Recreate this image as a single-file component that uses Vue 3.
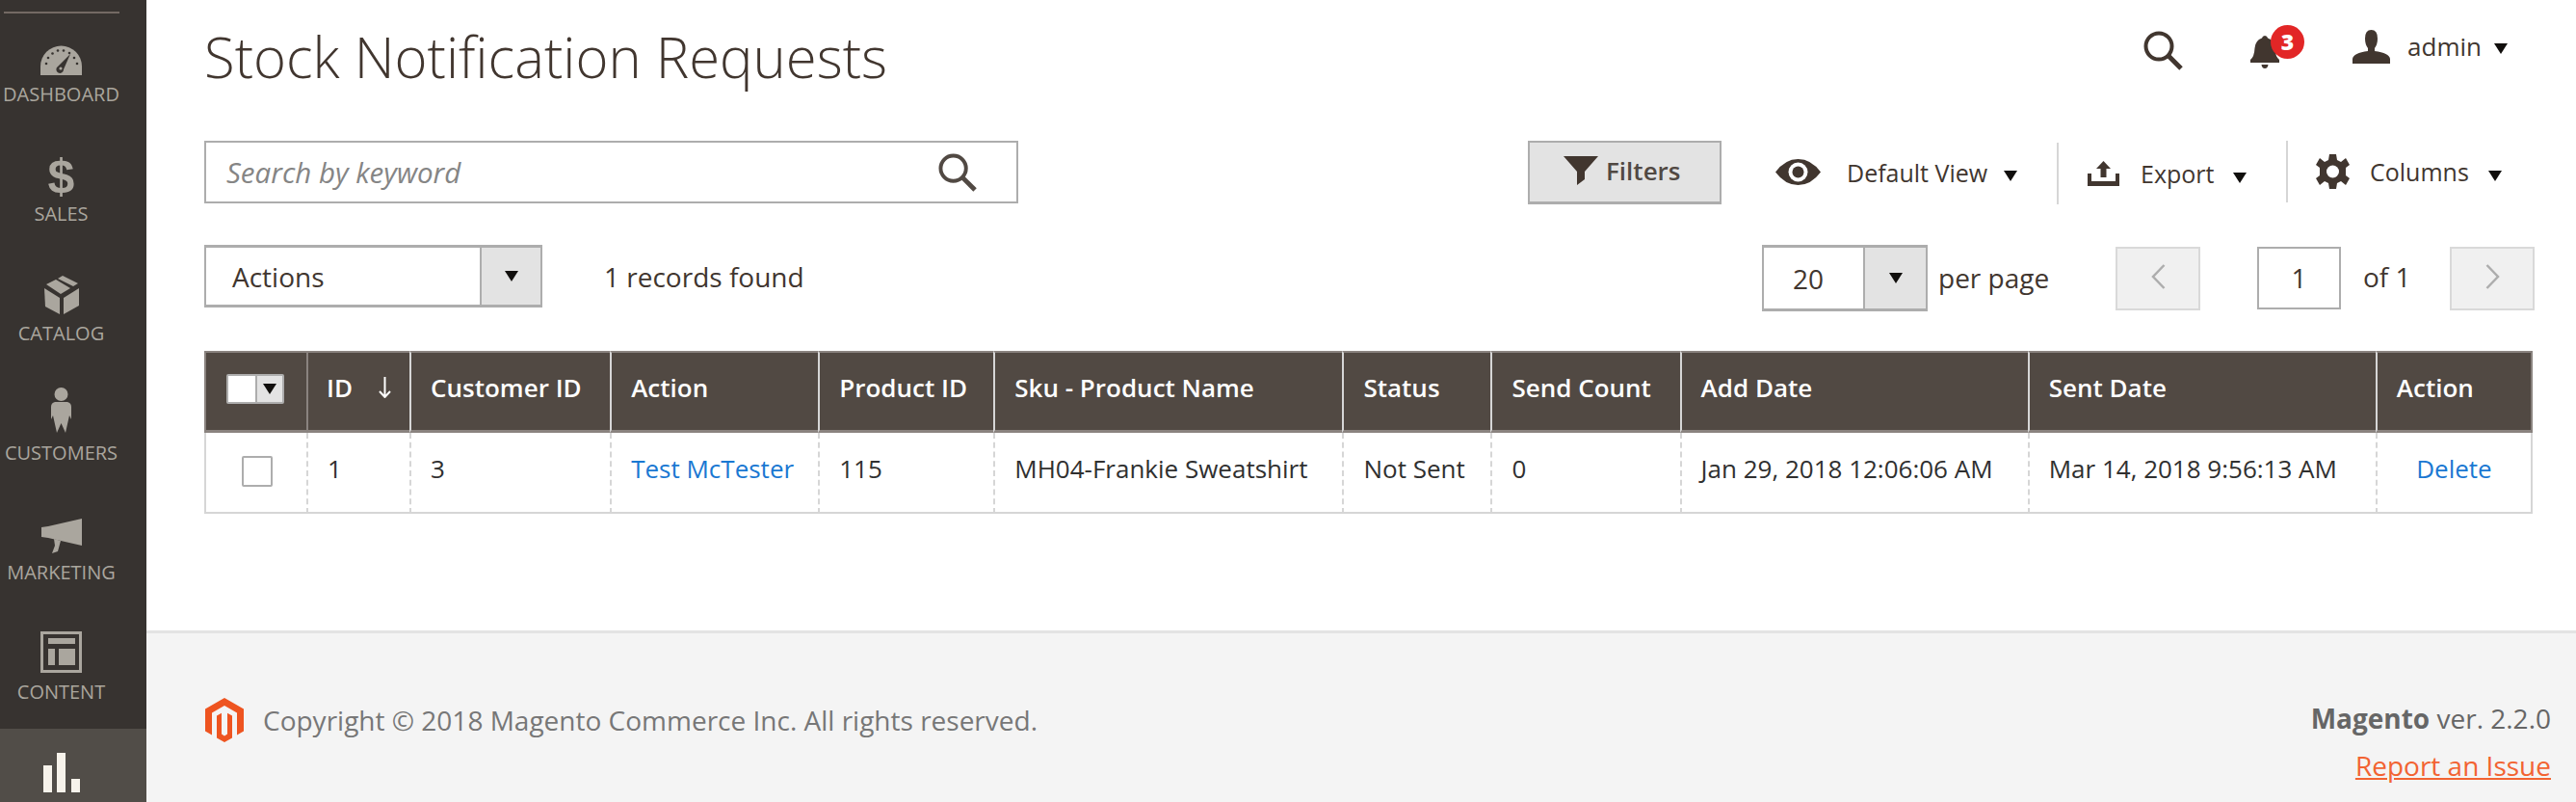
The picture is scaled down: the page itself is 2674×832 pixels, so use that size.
<script setup>
const columns = [
  { label: '', width: 106 },
  { label: 'ID', width: 107, sort: true },
  { label: 'Customer ID', width: 208 },
  { label: 'Action', width: 216 },
  { label: 'Product ID', width: 182 },
  { label: 'Sku - Product Name', width: 362 },
  { label: 'Status', width: 154 },
  { label: 'Send Count', width: 196 },
  { label: 'Add Date', width: 361 },
  { label: 'Sent Date', width: 361 },
  { label: 'Action', width: 163 }
]
const row = ['1', '3', 'Test McTester', '115', 'MH04-Frankie Sweatshirt', 'Not Sent', '0', 'Jan 29, 2018 12:06:06 AM', 'Mar 14, 2018 9:56:13 AM']
</script>

<template>
  <div class="app">
    <aside class="sidebar">
      <div class="rule"></div>
      <nav>
        <a class="item">
          <span class="ico">
            <svg width="43" height="31" viewBox="0 0 43 31">
              <path d="M0 31V22A21.5 21.5 0 0 1 43 22V31Z" fill="#aaa69e"/>
              <g fill="#373330">
                <circle cx="6" cy="19" r="1.3"/><circle cx="8" cy="13" r="1.3"/><circle cx="12.500" cy="8.500" r="1.300"/><circle cx="18" cy="5.500" r="1.300"/><circle cx="24" cy="5.500" r="1.300"/><circle cx="30" cy="8" r="1.300"/><circle cx="35" cy="13" r="1.300"/><circle cx="38" cy="19" r="1.300"/>
                <path d="M31 9 24 25A3.800 3.800 0 1 1 18 22Z"/>
              </g>
              <circle cx="21" cy="24" r="1.600" fill="#aaa69e"/>
            </svg>
          </span>
          <span class="lbl">Dashboard</span>
        </a>
        <a class="item">
          <span class="ico dollar">$</span>
          <span class="lbl">Sales</span>
        </a>
        <a class="item">
          <span class="ico">
            <svg width="36" height="40" viewBox="0 0 36 40" fill="#aaa69e">
              <path d="M0 13 16 23V40L1 32Z"/><path d="M20 23 36 13V31L20 40Z"/>
              <path d="M2 9 12 4 27 13 17 19Z"/><path d="M14 3 19 0 35 8 30 11Z"/>
            </svg>
          </span>
          <span class="lbl">Catalog</span>
        </a>
        <a class="item">
          <span class="ico">
            <svg width="21" height="48" viewBox="0 0 21 48" fill="#aaa69e">
              <circle cx="10.500" cy="7" r="7"/>
              <path d="M4 15H17Q21 16 21 20V33L19 29 15 47 10.500 37 6 47 2 29 0 33V20Q0 16 4 15Z"/>
            </svg>
          </span>
          <span class="lbl">Customers</span>
        </a>
        <a class="item">
          <span class="ico">
            <svg width="42" height="36" viewBox="0 0 42 36" fill="#aaa69e">
              <path d="M0 9 7 8V20L0 19Z"/><path d="M7 8 42 0V28L7 20Z"/><path d="M13 21 20 23 17 34 11 36 14 28Z"/>
            </svg>
          </span>
          <span class="lbl">Marketing</span>
        </a>
        <a class="item">
          <span class="ico">
            <svg width="43" height="43" viewBox="0 0 43 43" fill="#aaa69e">
              <path d="M0 0H43V43H0ZM3 3V40H40V3Z" fill-rule="evenodd"/>
              <rect x="8" y="7" width="28" height="6"/><rect x="8" y="18" width="7" height="17"/><rect x="19" y="18" width="17" height="17"/>
            </svg>
          </span>
          <span class="lbl">Content</span>
        </a>
        <a class="item active">
          <span class="ico">
            <svg width="38" height="41" viewBox="0 0 38 41" fill="#f7f3eb">
              <rect x="0" y="13" width="9" height="28"/><rect x="14" y="0" width="9" height="41"/><rect x="29" y="27" width="9" height="14"/>
            </svg>
          </span>
        </a>
      </nav>
    </aside>

    <main class="main">
      <header class="top">
        <h1>Stock Notification Requests</h1>
        <div class="actions-top">
          <svg class="i-search" width="41" height="41" viewBox="0 0 41 41" fill="none" stroke="#41362f">
            <circle cx="16" cy="16" r="13.500" stroke-width="4"/><path d="M26 26 39 39" stroke-width="5"/>
          </svg>
          <div class="bell">
            <svg width="30" height="35" viewBox="0 0 30 35" fill="#41362f">
              <path d="M15 0Q17.500 0 18 2.500 25 5 25.500 13 26 22 30 25V28H0V25Q4 22 4.500 13 5 5 12 2.500 12.500 0 15 0Z"/><path d="M11.500 30H18.500Q18 34 15 34 12 34 11.500 30Z"/>
            </svg>
            <span class="badge">3</span>
          </div>
          <div class="user">
            <svg width="39" height="35" viewBox="0 0 39 35" fill="#41362f">
              <path d="M19.500 0Q26 0 26 9 26 15 23 19V22Q38 24 39 30V35H0V30Q1 24 16 22V19Q13 15 13 9 13 0 19.500 0Z"/>
            </svg>
            <span class="admin">admin</span>
            <i class="caret"></i>
          </div>
        </div>
      </header>

      <section class="toolbar">
        <div class="search">
          <span class="placeholder">Search by keyword</span>
          <svg width="42" height="40" viewBox="0 0 41 41" fill="none" stroke="#514943">
            <circle cx="16" cy="16" r="13.500" stroke-width="4"/><path d="M26 26 39 39" stroke-width="5"/>
          </svg>
        </div>
        <button class="filters">
          <svg width="36" height="30" viewBox="0 0 36 30" fill="#41362f"><path d="M0 0H36L22 16V24L14 30V16Z"/></svg>
          <span>Filters</span>
        </button>
        <div class="tool view">
          <svg width="47" height="27" viewBox="0 0 47 27">
            <path d="M0 13.500Q10 0 23.500 0T47 13.500Q37 27 23.500 27T0 13.500Z" fill="#41362f"/>
            <circle cx="23.500" cy="13.500" r="10" fill="#fff"/><circle cx="23.500" cy="13.500" r="6" fill="#41362f"/>
          </svg>
          <span class="t1">Default View</span><i class="caret"></i>
        </div>
        <div class="tool export">
          <svg width="33" height="26" viewBox="0 0 33 26" fill="#41362f">
            <path d="M0 13H4V21H29V13H33V26H0Z"/><path d="M16.500 0 24 8H19.500V17H13.500V8H9Z"/>
          </svg>
          <span class="t2">Export</span><i class="caret"></i>
        </div>
        <div class="tool columns">
          <svg width="35" height="36" viewBox="0 0 35 36">
            <path d="M14 0H21L22 6 26 8 31 4 35 11 31 14V22L35 25 31 32 26 28 22 30 21 36H14L13 30 9 28 4 32 0 25 4 22V14L0 11 4 4 9 8 13 6Z" fill="#41362f"/>
            <circle cx="17.500" cy="18" r="6.500" fill="#fff"/>
          </svg>
          <span class="t3">Columns</span><i class="caret"></i>
        </div>
      </section>

      <section class="pager-row">
        <div class="select actions">
          <span class="val">Actions</span>
          <span class="drop"><i class="caret"></i></span>
        </div>
        <span class="found">1 records found</span>
        <div class="select perpage">
          <span class="val">20</span>
          <span class="drop"><i class="caret"></i></span>
        </div>
        <span class="per">per page</span>
        <button class="nav prev">
          <svg width="15" height="26" viewBox="0 0 15 26" fill="none" stroke="#adadad" stroke-width="2.500"><path d="M13.500 1 2 13 13.500 25"/></svg>
        </button>
        <div class="page-num">1</div>
        <span class="of">of 1</span>
        <button class="nav next">
          <svg width="15" height="26" viewBox="0 0 15 26" fill="none" stroke="#adadad" stroke-width="2.500"><path d="M1.500 1 13 13 1.500 25"/></svg>
        </button>
      </section>

      <table class="grid">
        <colgroup>
          <col v-for="(c, i) in columns" :key="i" :style="{ width: c.width + 'px' }">
        </colgroup>
        <thead>
          <tr>
            <th>
              <span class="massaction"><span class="box"></span><span class="mdrop"><i class="caret"></i></span></span>
            </th>
            <th v-for="(c, i) in columns.slice(1)" :key="i">
              <span class="th-in">
                {{ c.label }}
                <svg v-if="c.sort" class="sort" width="13" height="22" viewBox="0 0 13 22" fill="none" stroke="#fff" stroke-width="2"><path d="M6.500 0V20M1 15 6.500 21 12 15"/></svg>
              </span>
            </th>
          </tr>
        </thead>
        <tbody>
          <tr>
            <td><span class="check"></span></td>
            <td v-for="(v, i) in row" :key="i">
              <a v-if="i === 2" class="link">{{ v }}</a>
              <template v-else>{{ v }}</template>
            </td>
            <td class="center"><a class="link">Delete</a></td>
          </tr>
        </tbody>
      </table>

      <footer class="footer">
        <div class="copy">
          <svg width="40" height="46" viewBox="0 0 40 46" fill="#ee5420">
            <path d="M20 0 40 11.500V34.500L33 38.500V15.500L20 8 7 15.500V38.500L0 34.500V11.500Z"/>
            <path d="M20 46 12 41.500V18.500L17 15.700V37.500L20 39.500 23 37.500V15.700L28 18.500V41.500Z"/>
          </svg>
          <span>Copyright © 2018 Magento Commerce Inc. All rights reserved.</span>
        </div>
        <div class="ver">
          <div><b>Magento</b> ver. 2.2.0</div>
          <a class="report">Report an Issue</a>
        </div>
      </footer>
    </main>
  </div>
</template>

<style>
html, body { margin: 0; overflow: hidden; }
</style>

<style scoped>
.app {
  display: flex;
  width: 2674px;
  height: 832px;
  overflow: hidden;
  font-family: "Open Sans", "Noto Sans", sans-serif;
  color: #41362f;
  background: #fff;
}
.sidebar {
  flex: 0 0 152px;
  background: #373330;
  overflow: hidden;
  height: 832px;
}
.rule {
  height: 2px;
  margin: 12px 28px -2px 4px;
  background: #736963;
}
.item {
  display: flex;
  flex-direction: column;
  align-items: center;
  height: 124px;
  box-sizing: border-box;
  padding: 16px 25px 0 0;
  color: #aaa69e;
}
.item.active { background: #514d48; color: #f7f3eb; }
.ico {
  display: flex;
  align-items: flex-end;
  justify-content: center;
  height: 50px;
}
.dollar {
  font-family: "Liberation Sans", sans-serif;
  font-weight: 700;
  font-size: 50px;
  line-height: 50px;
  transform: translateY(6px);
}
.lbl {
  margin-top: 6px;
  font-size: 20px;
  line-height: 27px;
  text-transform: uppercase;
  white-space: nowrap;
}
.main {
  flex: 1;
  min-width: 0;
  display: flex;
  flex-direction: column;
}
.top {
  display: flex;
  justify-content: space-between;
  height: 146px;
  padding: 0 71px 0 60px;
  flex: none;
  box-sizing: border-box;
}
h1 {
  margin: 21px 0 0;
  font-size: 58px;
  line-height: 76px;
  font-weight: 300;
  color: #41362f;
  height: 76px;
  white-space: nowrap;
}
.actions-top { display: flex; align-items: flex-start; padding-top: 31px; }
.i-search { margin: 1px 70px 0 0; }
.bell { position: relative; margin: 6px 76px 0 0; width: 30px; height: 35px; }
.badge {
  position: absolute;
  left: 21px;
  top: -11px;
  width: 35px;
  height: 35px;
  border-radius: 50%;
  background: #e22626;
  color: #fff;
  font-size: 23px;
  font-weight: 800;
  line-height: 35px;
  text-align: center;
}
.user { display: flex; align-items: center; height: 35px; }
.admin { margin: 0 13px 0 18px; font-size: 26px; line-height: 35px; }
.user .caret { transform: translateY(2px); }
.caret {
  display: block;
  width: 0;
  height: 0;
  border-style: solid;
  border-width: 11px 7.5px 0;
  border-color: #110f0d transparent transparent;
  flex: none;
}
.toolbar {
  display: flex;
  align-items: flex-start;
  height: 66px;
  flex: none;
  padding-left: 60px;
}
.search {
  display: flex;
  align-items: center;
  justify-content: space-between;
  width: 845px;
  height: 65px;
  box-sizing: border-box;
  border: 2px solid #adadad;
  padding: 0 40px 0 21px;
  margin-right: 529px;
}
.placeholder { font-style: italic; font-size: 29.5px; color: #858585; }
.filters {
  display: flex;
  align-items: center;
  width: 201px;
  height: 66px;
  box-sizing: border-box;
  padding: 0 0 4px 35px;
  background: #e3e3e3;
  border: 2px solid #adadad;
  border-bottom-width: 3px;
  font: 600 26px "Open Sans", sans-serif;
  color: #514943;
}
.filters span { margin-left: 8px; }
.tool {
  display: flex;
  align-items: center;
  height: 64px;
  box-sizing: border-box;
  font-size: 25px;
  color: #41362f;
  flex: none;
}
.tool .caret { transform: translateY(4px); }
.view { width: 348px; padding-left: 56px; }
.view .t1 { margin: 2px 17px 0 27px; }
.export { width: 238px; padding-left: 30px; border-left: 2px solid #d6d6d6; margin-top: 2px; }
.export .t2 { margin: 0 20px 0 22px; }
.columns { padding-left: 29px; border-left: 2px solid #d6d6d6; }
.columns .t3 { margin: 0 20px 0 21px; }
.pager-row {
  display: flex;
  align-items: flex-start;
  height: 69px;
  margin-top: 42px;
  flex: none;
  padding-left: 60px;
  font-size: 28px;
}
.select {
  display: flex;
  box-sizing: border-box;
  border: 2px solid #adadad;
  border-top-width: 3px;
  border-bottom-width: 3px;
  flex: none;
}
.val { flex: 1; font-size: 28px; line-height: 60px; }
.drop {
  display: flex;
  align-items: center;
  justify-content: center;
  background: #e3e3e3;
  border-left: 2px solid #adadad;
}
.actions { width: 351px; height: 65px; }
.actions .val { padding-left: 27px; }
.actions .drop { width: 61px; }
.found { margin: 0 0 0 64px; line-height: 67px; width: 1202px; white-space: nowrap; flex: none; font-size: 28px; }
.perpage { width: 172px; height: 69px; }
.perpage .val { padding-left: 30px; line-height: 64px; font-size: 28px; }
.perpage .drop { width: 63px; }
.per { margin-left: 11px; line-height: 69px; width: 184px; flex: none; font-size: 28px; }
.nav {
  display: flex;
  align-items: center;
  justify-content: center;
  width: 88px;
  height: 66px;
  margin-top: 2px;
  padding: 0 0 4px;
  box-sizing: border-box;
  background: #f0f0f0;
  border: 2px solid #d9d9d9;
  flex: none;
}
.page-num {
  width: 87px;
  height: 65px;
  margin: 2px 0 0 59px;
  box-sizing: border-box;
  border: 2px solid #adadad;
  text-align: center;
  line-height: 60px;
  font-size: 28px;
  flex: none;
}
.of { margin-left: 23px; width: 90px; line-height: 66px; flex: none; font-size: 28px; }
.grid {
  width: 2417px;
  margin: 41px 0 0 60px;
  table-layout: fixed;
  border-collapse: separate;
  border-spacing: 0;
  flex: none;
}
th, td {
  box-sizing: border-box;
  padding: 0 0 0 20px;
  text-align: left;
  white-space: nowrap;
}
th {
  height: 85px;
  padding-bottom: 8px;
  background: #514943;
  color: #fff;
  font-size: 26px;
  font-weight: 600;
  border-top: 2px solid #8a837f;
  border-bottom: 3px solid #8a837f;
  border-left: 2px solid #d6d6d6;
}
th:first-child { border-left: 2px solid #8a837f; padding: 0 0 6px 21px; }
th:nth-child(2) { border-left-color: #8a837f; padding-left: 19px; }
th:last-child { border-right: 2px solid #8a837f; }
td {
  height: 84px;
  padding-bottom: 8px;
  font-size: 26px;
  color: #303030;
  border-left: 2px dashed #d6d6d6;
  border-bottom: 2px solid #d6d6d6;
}
td:first-child { border-left: 2px solid #d6d6d6; padding: 0 0 0 37px; }
td:last-child { border-right: 2px solid #d6d6d6; }
.center { text-align: center; padding-left: 0; }
.link { color: #1a78d2; }
.th-in { display: inline-flex; align-items: center; }
.sort { margin-left: 27px; }
.massaction {
  display: flex;
  width: 60px;
  height: 31px;
  box-sizing: border-box;
  border: 2px solid #adadad;
  border-radius: 2px;
  background: #fff;
}
.box { width: 28px; }
.mdrop {
  flex: 1;
  display: flex;
  align-items: center;
  justify-content: center;
  background: #e3e3e3;
  border-left: 2px solid #adadad;
}
.check {
  display: block;
  width: 32px;
  height: 32px;
  box-sizing: border-box;
  border: 2px solid #adadad;
  border-radius: 2px;
  transform: translateY(-1px);
}
.footer {
  flex: 1;
  display: flex;
  justify-content: space-between;
  margin-top: 121px;
  padding: 0 26px 0 61px;
  background: #f4f4f4;
  border-top: 3px solid #e3e3e3;
  font-size: 28px;
  color: #777;
}
.copy { display: flex; align-items: center; gap: 20px; height: 122px; margin-top: 29px; }
.ver { text-align: right; margin-top: 71px; line-height: 35px; color: #666; }
.ver b { font-weight: 700; }
.report { display: block; margin-top: 14px; color: #f26332; text-decoration: underline; }
</style>
